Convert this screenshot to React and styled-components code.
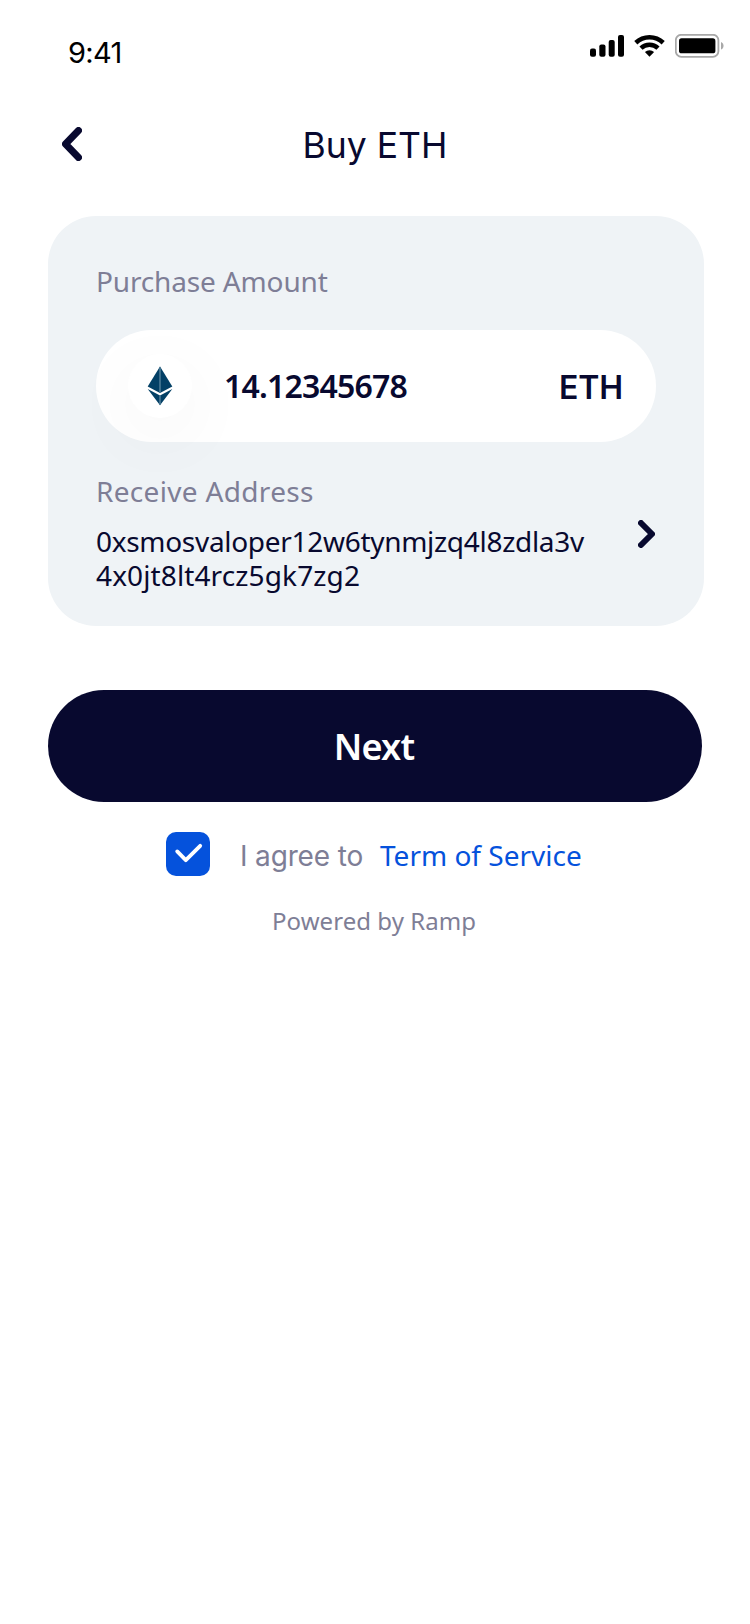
import React from 'react';
import styled, { createGlobalStyle } from 'styled-components';

const navy = '#08092f';
const muted = '#7e7e96';
const blue = '#0552dc';

const GlobalStyle = createGlobalStyle`
  * { box-sizing: border-box; }
  body {
    margin: 0;
    background: #fff;
    font-family: "Noto Sans", sans-serif;
    color: ${navy};
  }
  svg { display: block; }
  button { font: inherit; border: 0; padding: 0; background: none; color: inherit; }
`;

const Screen = styled.div`
  width: 750px;
  min-height: 1624px;
  background: #fff;
`;

const StatusBar = styled.div`
  display: flex;
  justify-content: space-between;
  height: 96px;
  padding: 34px 26px 0 68px;
`;

const Clock = styled.div`
  font-family: Inter, sans-serif;
  font-size: 29px;
  line-height: 37px;
  letter-spacing: -0.7px;
  color: #000;
`;

const StatusIcons = styled.div`
  display: flex;
  gap: 10px;
  height: 24px;
`;

const Header = styled.header`
  display: grid;
  grid-template-columns: 1fr auto 1fr;
  align-items: center;
  height: 96px;
  padding: 0 62px;
`;

const Title = styled.h1`
  margin: 0;
  padding-top: 3px;
  font-family: Inter, sans-serif;
  font-size: 35.5px;
  font-weight: 400;
  line-height: 48px;
`;

const BackButton = styled.button`
  justify-self: start;
`;

const Main = styled.main`
  display: flex;
  flex-direction: column;
  padding: 24px 48px 0;
`;

const Card = styled.section`
  width: 656px;
  margin-right: -2px;
  padding: 48px 48px 34px;
  border-radius: 48px;
  background: #eff3f6;
`;

const Label = styled.div`
  font-size: 28px;
  line-height: 34px;
  letter-spacing: ${(p) => p.$spacing}px;
  color: ${muted};
`;

const AmountField = styled.div`
  display: flex;
  align-items: center;
  height: 112px;
  margin: 32px 0;
  padding: 0 32px;
  border-radius: 56px;
  background: #fff;
`;

const Coin = styled.div`
  display: flex;
  align-items: center;
  justify-content: center;
  width: 64px;
  height: 64px;
  border-radius: 50%;
  background: #fff;
  box-shadow: 0 18px 72px rgba(0, 0, 0, 0.05);
`;

const Amount = styled.div`
  flex: 1;
  margin-left: 32px;
  font-size: 32px;
  font-weight: 600;
  line-height: 44px;
  letter-spacing: -0.8px;
`;

const Currency = styled.div`
  padding: 3px 1px 0 0;
  font-family: Inter, sans-serif;
  font-size: 32px;
  font-weight: 600;
  line-height: 44px;
  letter-spacing: -0.1px;
`;

const AddressRow = styled.div`
  display: flex;
  align-items: center;
  justify-content: space-between;
  padding-right: 1px;
`;

const Address = styled.div`
  margin-top: 16px;
  font-size: 28px;
  line-height: 34px;
  white-space: nowrap;
`;

const AddressLine = styled.div`
  letter-spacing: ${(p) => p.$spacing}px;
`;

const AddressButton = styled.button`
  padding-top: 2px;
`;

const NextButton = styled.button`
  && {
    height: 112px;
    margin-top: 64px;
    padding: 1px 2px 0 0;
    border-radius: 56px;
    background: ${navy};
    color: #fff;
    font-size: 36px;
    font-weight: 600;
    letter-spacing: -0.8px;
  }
`;

const Agreement = styled.label`
  display: flex;
  align-items: center;
  height: 44px;
  margin: 30px 0 0 118px;
  font-size: 28px;
  line-height: 34px;
`;

const Checkbox = styled.span`
  display: flex;
  align-items: center;
  justify-content: center;
  width: 44px;
  height: 44px;
  border-radius: 10px;
  background: ${blue};
`;

const AgreeText = styled.span`
  width: 124px;
  padding-top: 3px;
  margin-left: 30px;
  font-family: Inter, sans-serif;
  letter-spacing: -0.15px;
  color: ${muted};
`;

const TermsLink = styled.a`
  padding-top: 2px;
  margin-left: 16px;
  color: ${blue};
`;

const PoweredBy = styled.div`
  margin-top: 28px;
  padding-right: 2px;
  text-align: center;
  font-size: 24px;
  line-height: 34px;
  letter-spacing: 0.05px;
  color: ${muted};
`;

const SignalIcon = () => (
  <svg width="34" height="24" viewBox="0 0 34 24">
    <rect x="0" y="14.4" width="6" height="8.3" rx="2" />
    <rect x="9.3" y="10.4" width="6.2" height="12.3" rx="2" />
    <rect x="18.7" y="6" width="6" height="16.7" rx="2" />
    <rect x="28" y="1" width="6" height="21.7" rx="2" />
  </svg>
);

const WifiIcon = () => (
  <svg width="31" height="24" viewBox="0 0 31 24">
    <g fill="none" stroke="#000" strokeWidth="4.6">
      <path d="M1.8 8.7 A20 20 0 0 1 29.2 8.7" />
      <path d="M7 14.1 A12.4 12.4 0 0 1 24 14.1" />
    </g>
    <path d="M15.5 22.8 L10.9 18.1 A6.8 6.8 0 0 1 20.1 18.1 Z" />
  </svg>
);

const BatteryIcon = () => (
  <svg width="49" height="24" viewBox="0 0 49 24">
    <rect x="0.8" y="0.8" width="42.6" height="22" rx="5.5" fill="none" stroke="#a8a8a8" strokeWidth="1.8" />
    <rect x="4" y="4.3" width="36.4" height="15" rx="2.6" />
    <path d="M46 8 C49.4 9.4 49.4 14.2 46 15.6 Z" fill="#a8a8a8" />
  </svg>
);

const Chevron = ({ width, height, stroke, left }) => {
  const s = stroke / 2;
  const a = left ? width - s : s;
  const b = left ? s : width - s;
  return (
    <svg width={width} height={height}>
      <path
        d={`M${a} ${s} L${b} ${height / 2} L${a} ${height - s}`}
        fill="none"
        stroke={navy}
        strokeWidth={stroke}
        strokeLinecap="round"
        strokeLinejoin="round"
      />
    </svg>
  );
};

const EthereumIcon = () => (
  <svg width="26" height="40" viewBox="0 0 26 40">
    <g fill="#034066">
      <path d="M13 0.6 L25.3 20.6 L13 27 L0.7 20.6 Z" />
      <path d="M0.7 23 L13 29.6 L25.3 23 L13 39.2 Z" />
    </g>
    <path d="M12.2 2 L13 0.6 L13.8 2 V26.6 L13 27 L12.2 26.6 Z M12.2 29.2 L13 29.6 L13.8 29.2 V38.2 L13 39.2 L12.2 38.2 Z" fill="#4d7b96" />
  </svg>
);

const CheckIcon = () => (
  <svg width="44" height="44" viewBox="0 0 44 44">
    <path d="M11.2 19.4 L19.8 28.2 L34.2 13.8" fill="none" stroke="#fff" strokeWidth="3.8" strokeLinecap="round" strokeLinejoin="round" />
  </svg>
);

export default function App() {
  return (
    <Screen>
      <GlobalStyle />
      <StatusBar>
        <Clock>9:41</Clock>
        <StatusIcons>
          <SignalIcon />
          <WifiIcon />
          <BatteryIcon />
        </StatusIcons>
      </StatusBar>
      <Header>
        <BackButton aria-label="Back">
          <Chevron left width={20} height={34} stroke={7} />
        </BackButton>
        <Title>Buy ETH</Title>
      </Header>
      <Main>
        <Card>
          <Label $spacing={-0.15}>Purchase Amount</Label>
          <AmountField>
            <Coin>
              <EthereumIcon />
            </Coin>
            <Amount>14.12345678</Amount>
            <Currency>ETH</Currency>
          </AmountField>
          <AddressRow>
            <div>
              <Label $spacing={0.32}>Receive Address</Label>
              <Address>
                <AddressLine $spacing={-0.3}>0xsmosvaloper12w6tynmjzq4l8zdla3v</AddressLine>
                <AddressLine $spacing={0.12}>4x0jt8lt4rcz5gk7zg2</AddressLine>
              </Address>
            </div>
            <AddressButton aria-label="Change address">
              <Chevron width={17} height={28} stroke={6} />
            </AddressButton>
          </AddressRow>
        </Card>
        <NextButton>Next</NextButton>
        <Agreement>
          <Checkbox>
            <CheckIcon />
          </Checkbox>
          <AgreeText>I agree to</AgreeText>
          <TermsLink>Term of Service</TermsLink>
        </Agreement>
        <PoweredBy>Powered by Ramp</PoweredBy>
      </Main>
    </Screen>
  );
}
